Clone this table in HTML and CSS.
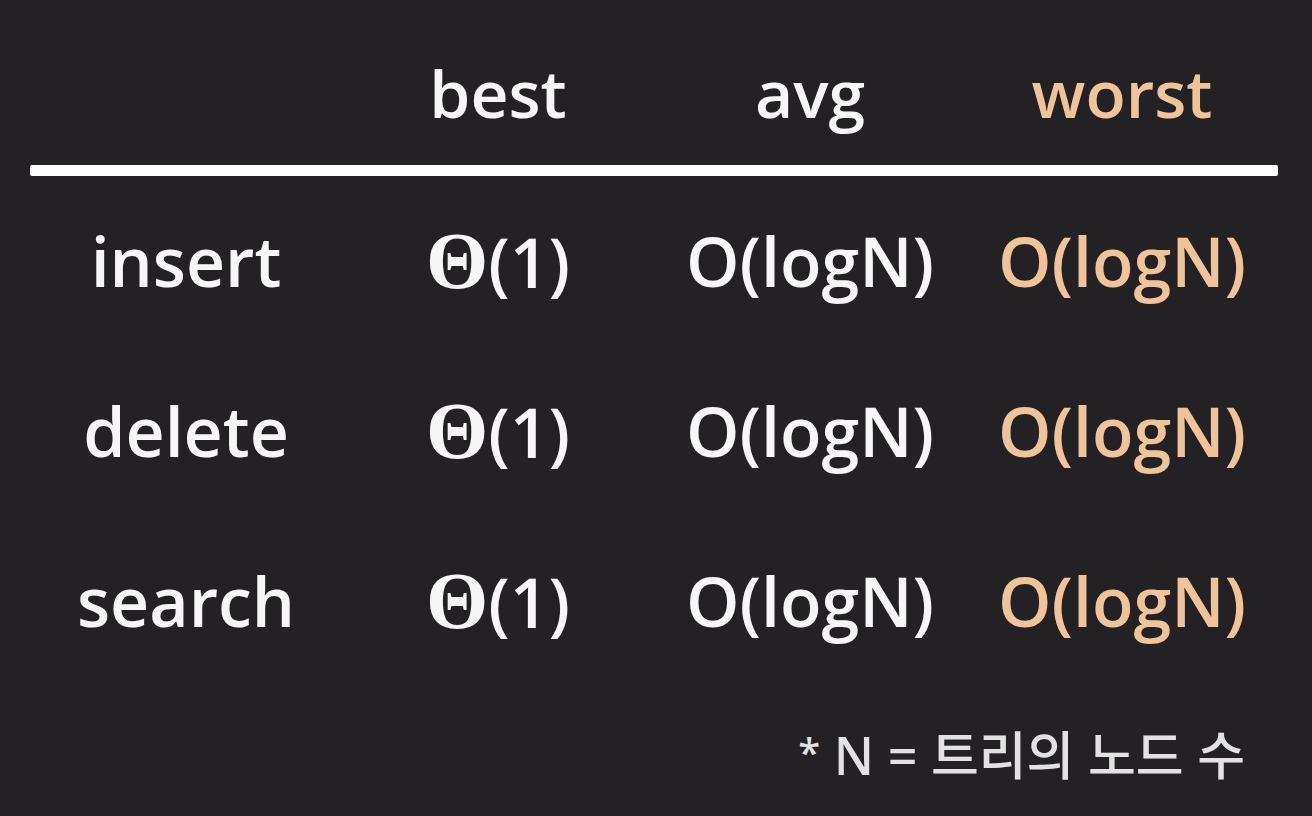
FILE: index.html
```html
<!DOCTYPE html>
<html lang="ko">
<head>
  <meta charset="UTF-8" />
  <meta name="viewport" content="width=device-width, initial-scale=1.0"/>
  <title>Complexity Table</title>
  <link rel="stylesheet" href="styles.css">
</head>
<body>
  <div class="slide">
    <div class="grid head">
      <div class="cell"></div>
      <div class="cell">best</div>
      <div class="cell">avg</div>
      <div class="cell worst">worst</div>
    </div>

    <div class="rule"></div>

    <div class="grid row">
      <div class="cell">insert</div>
      <div class="cell"><span class="theta">Θ</span>(1)</div>
      <div class="cell">O(logN)</div>
      <div class="cell worst">O(logN)</div>
    </div>
    <div class="grid row">
      <div class="cell">delete</div>
      <div class="cell"><span class="theta">Θ</span>(1)</div>
      <div class="cell">O(logN)</div>
      <div class="cell worst">O(logN)</div>
    </div>
    <div class="grid row">
      <div class="cell">search</div>
      <div class="cell"><span class="theta">Θ</span>(1)</div>
      <div class="cell">O(logN)</div>
      <div class="cell worst">O(logN)</div>
    </div>

    <div class="note"><span class="star">*</span> N = 트리의 노드 수</div>
  </div>
</body>
</html>
```

FILE: styles.css
```css
body {
  margin: 0;
  background-color: #232124;
  color: #f6f6f6;
  font-family: 'Open Sans', 'Noto Sans', sans-serif;
  font-weight: 600;
}

.slide {
  width: 1312px;
  height: 816px;
  overflow: hidden;
}

.grid {
  display: grid;
  grid-template-columns: repeat(4, 1fr);
  margin: 0 34px 0 30px;
  text-align: center;
}

.head {
  padding-top: 47px;
  padding-bottom: 28px;
  font-size: 66px;
  line-height: normal;
}

.rule {
  height: 11px;
  margin: 0 34px 0 30px;
  background: #fdfdfd;
  border-radius: 2px;
}

.row {
  height: 170px;
  font-size: 68px;
  line-height: 170px;
}

.theta {
  font-family: 'Liberation Serif', serif;
  font-weight: bold;
  font-size: 80px;
}

.worst {
  color: #f0c49b;
}

.note {
  margin-top: 29px;
  padding-right: 67px;
  text-align: right;
  font-family: 'Noto Sans', 'Noto Sans CJK KR', sans-serif;
  font-weight: 500;
  font-size: 52px;
  line-height: normal;
  color: #e2e2e2;
}

.star {
  font-size: 40px;
  vertical-align: 8px;
}
```
